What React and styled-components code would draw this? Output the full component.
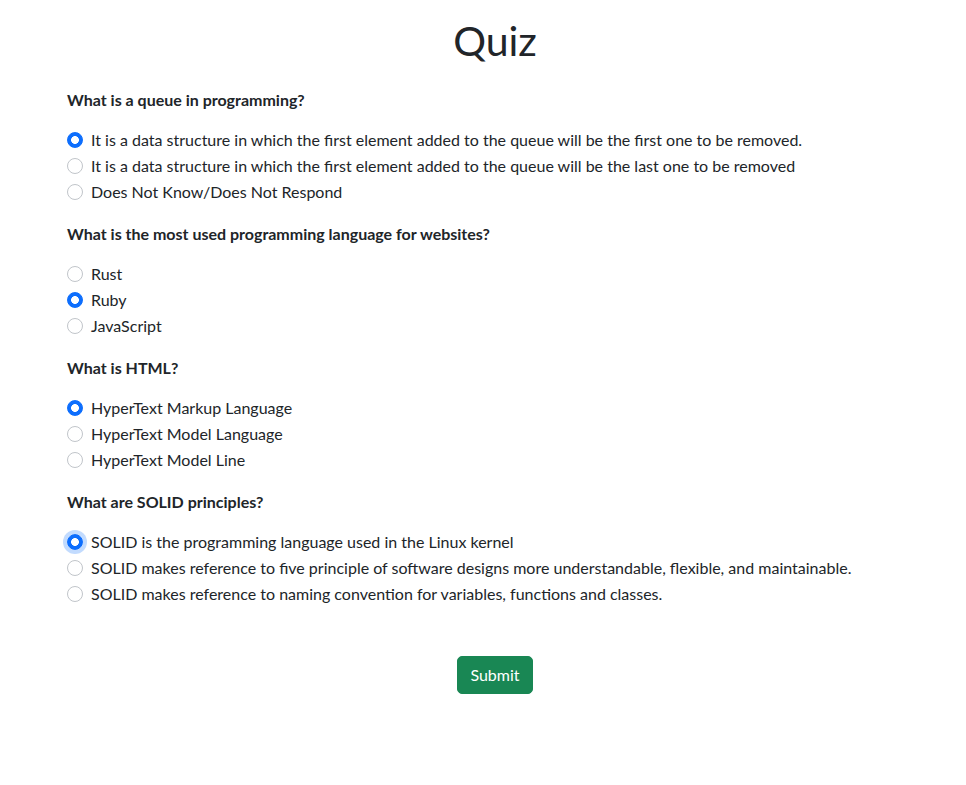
import React, { useState } from "react"
import styled, { createGlobalStyle } from "styled-components"

const GlobalStyle = createGlobalStyle`
  body {
    margin: 0;
    font-family: Lato, "Noto Sans", "Liberation Sans", sans-serif;
    font-size: 16px;
    line-height: 1.5;
    color: #212529;
    background: #fff;
  }
  * { box-sizing: border-box; }
`

const Page = styled.div`
  padding: 12px 43px 40px 67px;
`

const Title = styled.h1`
  margin: 0 0 19px;
  text-align: center;
  font-size: 41px;
  font-weight: 400;
  line-height: 57px;
`

const Question = styled.fieldset`
  border: 0;
  padding: 0;
  margin: 0 0 16px;
`

const Heading = styled.legend`
  padding: 0;
  margin: 0 0 16px;
  font-weight: 700;
  line-height: 24px;
`

const Option = styled.label`
  display: flex;
  align-items: center;
  min-height: 24px;
  margin-bottom: 2px;
  cursor: pointer;
`

const Radio = styled.input`
  appearance: none;
  width: 16px;
  height: 16px;
  margin: 0 8px 0 0;
  flex-shrink: 0;
  border-radius: 50%;
  border: 1px solid #c1c5ca;
  background: #fff;
  &:checked {
    border-color: #0d6efd;
    background: radial-gradient(circle, #fff 0 3.6px, #0d6efd 4.2px);
  }
  &.focused {
    box-shadow: 0 0 0 4px rgba(13, 110, 253, 0.25);
  }
`

const Actions = styled.div`
  display: flex;
  justify-content: center;
  padding-top: 32px;
`

const Button = styled.button`
  font-family: inherit;
  font-size: 16px;
  line-height: 24px;
  padding: 6px 12px;
  color: #fff;
  background: #198754;
  border: 1px solid #198754;
  border-radius: 5px;
  cursor: pointer;
`

const questions = [
  {
    q: "What is a queue in programming?",
    options: [
      "It is a data structure in which the first element added to the queue will be the first one to be removed.",
      "It is a data structure in which the first element added to the queue will be the last one to be removed",
      "Does Not Know/Does Not Respond",
    ],
    picked: 0,
  },
  {
    q: "What is the most used programming language for websites?",
    options: ["Rust", "Ruby", "JavaScript"],
    picked: 1,
  },
  {
    q: "What is HTML?",
    options: ["HyperText Markup Language", "HyperText Model Language", "HyperText Model Line"],
    picked: 0,
  },
  {
    q: "What are SOLID principles?",
    options: [
      "SOLID is the programming language used in the Linux kernel",
      "SOLID makes reference to five principle of software designs more understandable, flexible, and maintainable.",
      "SOLID makes reference to naming convention for variables, functions and classes.",
    ],
    picked: 0,
    focused: true,
  },
]

const App = () => {
  const [answers, setAnswers] = useState(questions.map((q) => q.picked))

  const pick = (qi, oi) => {
    const next = [...answers]
    next[qi] = oi
    setAnswers(next)
  }

  return (
    <Page>
      <GlobalStyle />
      <Title>Quiz</Title>
      <form onSubmit={(e) => e.preventDefault()}>
        {questions.map((item, qi) => (
          <Question key={qi}>
            <Heading>{item.q}</Heading>
            {item.options.map((opt, oi) => (
              <Option key={oi}>
                <Radio
                  type="radio"
                  name={`q${qi}`}
                  checked={answers[qi] === oi}
                  onChange={() => pick(qi, oi)}
                  className={item.focused && answers[qi] === oi ? "focused" : ""}
                />
                {opt}
              </Option>
            ))}
          </Question>
        ))}
        <Actions>
          <Button type="submit">Submit</Button>
        </Actions>
      </form>
    </Page>
  )
}

export default App
